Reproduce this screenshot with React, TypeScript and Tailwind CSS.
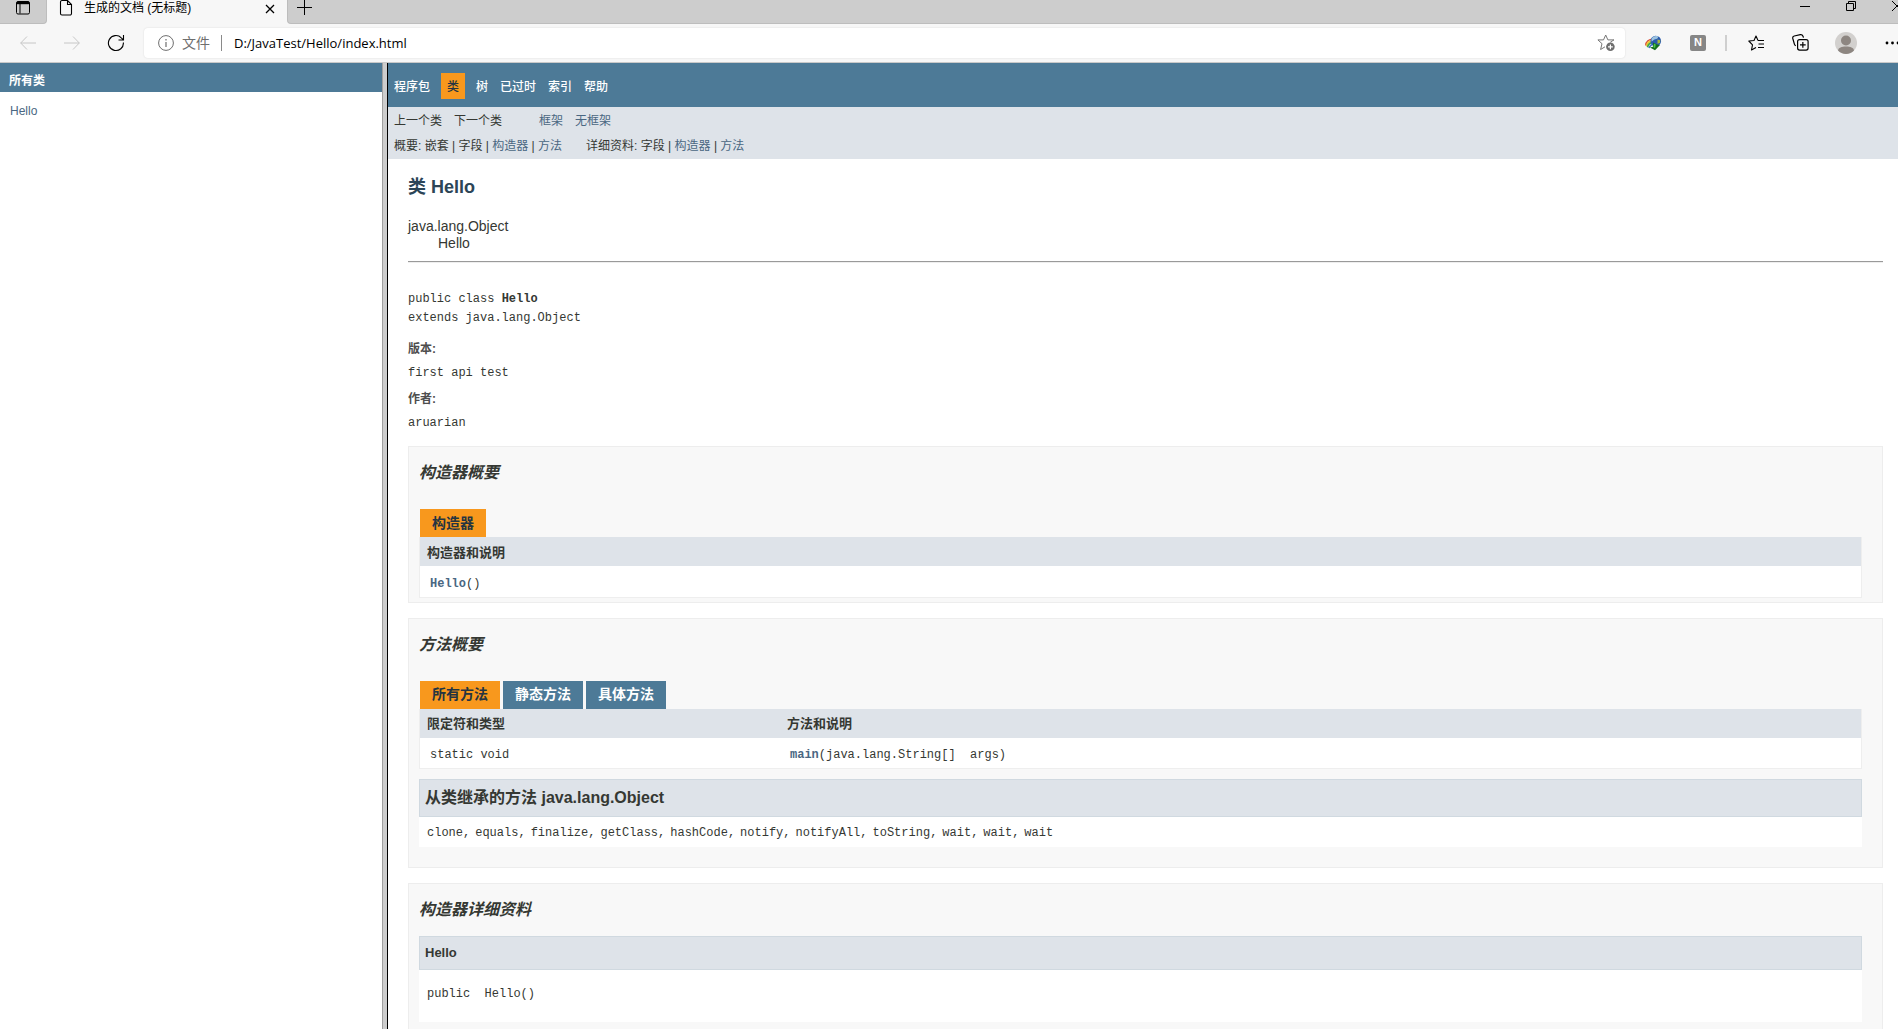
import type { ReactNode } from 'react';
import clsx from 'clsx';

const topNav = ['程序包', '类', '树', '已过时', '索引', '帮助'];
const methodTabs = ['所有方法', '静态方法', '具体方法'];
const inheritedMethods = [
  'clone',
  'equals',
  'finalize',
  'getClass',
  'hashCode',
  'notify',
  'notifyAll',
  'toString',
  'wait',
  'wait',
  'wait',
];

const mono = "font-['Liberation_Mono','Noto_Sans_CJK_SC',monospace] text-[12px]";

function IconButton({ label, className, children }: { label: string; className?: string; children: ReactNode }) {
  return (
    <button type="button" aria-label={label} className={clsx('flex shrink-0 items-center justify-center', className)}>
      {children}
    </button>
  );
}

function TabStrip() {
  return (
    <div className="flex h-6 items-stretch bg-[#f7f7f7]">
      <IconButton label="标签页操作" className="w-[47px] rounded-br border-r border-b border-[#bdbdbd] bg-[#cdcdcd] pb-2">
        <svg width="16" height="16" viewBox="0 0 16 16" fill="none" stroke="#000" className="shrink-0">
          <rect x="1.5" y="1.5" width="13" height="12.500" rx="1.500" />
          <path d="M2 3h12" strokeWidth="2.400" />
          <path d="M5 4v9.500" />
        </svg>
      </IconButton>
      <div className="flex w-60 items-start pl-3">
        <svg width="14" height="16" viewBox="0 0 14 16" fill="none" stroke="#000" strokeWidth="1.1" className="shrink-0">
          <path d="M2.500 .5H8.500L12.500 4.500V13.500a1.500 1.500 0 0 1-1.500 1.500H3a1.500 1.500 0 0 1-1.500-1.500V2A1.500 1.500 0 0 1 3 .5ZM8.500 .5V4.500H12.500" />
        </svg>
        <span className="ml-[11px] flex-1 text-[12px] leading-4 text-black">生成的文档 (无标题)</span>
        <IconButton label="关闭标签页" className="mr-[11px] h-[17px] w-3">
          <svg width="10" height="10" viewBox="0 0 10 10" stroke="#000" strokeWidth="1.3">
            <path d="M1 1l8 8M9 1L1 9" />
          </svg>
        </IconButton>
      </div>
      <div className="flex flex-1 items-start justify-between overflow-hidden rounded-bl border-b border-l border-[#bdbdbd] bg-[#cdcdcd]">
        <IconButton label="新建标签页" className="ml-[9px] h-[15px]">
          <svg width="15" height="15" viewBox="0 0 15 15" stroke="#000">
            <path d="M7.500 0v15M0 7.500h15" />
          </svg>
        </IconButton>
        <div className="flex h-3 items-center">
          <IconButton label="最小化">
            <svg width="10" height="10" viewBox="0 0 10 10" stroke="#000">
              <path d="M0 5.500h10" />
            </svg>
          </IconButton>
          <IconButton label="还原" className="ml-9">
            <svg width="10" height="10" viewBox="0 0 10 10" fill="none" stroke="#000">
              <path d="M.5 2.500h7v7h-7zM2.500 2.500v-2h7v7h-2" />
            </svg>
          </IconButton>
          <IconButton label="关闭" className="-mr-1 ml-9">
            <svg width="10" height="10" viewBox="0 0 10 10" stroke="#000">
              <path d="M0 0l10 10M10 0L0 10" />
            </svg>
          </IconButton>
        </div>
      </div>
    </div>
  );
}

function AddressBar() {
  return (
    <div className="flex h-[38px] items-center bg-[#f7f7f7] pb-px">
      <IconButton label="后退" className="ml-5">
        <svg width="16" height="14" viewBox="0 0 16 14" fill="none" stroke="#c6c6c6">
          <path d="M7 .5L.7 7L7 13.500M.7 7H16" />
        </svg>
      </IconButton>
      <IconButton label="前进" className="ml-7">
        <svg width="16" height="14" viewBox="0 0 16 14" fill="none" stroke="#c6c6c6">
          <path d="M9 .5L15.300 7L9 13.500M15.300 7H0" />
        </svg>
      </IconButton>
      <IconButton label="刷新" className="ml-[27px]">
        <svg width="18" height="18" viewBox="0 0 18 18" fill="none" stroke="#000" strokeWidth="1.1">
          <path d="M16.400 8.500A7.500 7.500 0 1 1 14.300 3.800L16.400 5.800M16.500 1v5h-5" />
        </svg>
      </IconButton>
      <div className="ml-[19px] flex h-[30px] flex-1 items-center rounded bg-white pr-[10px] pl-[14px] shadow-[0_0_2px_rgba(0,0,0,0.12)]">
        <svg width="16" height="16" viewBox="0 0 16 16" fill="none" stroke="#6e6e6e" className="shrink-0">
          <circle cx="8" cy="8" r="7.400" />
          <path d="M8 7v5M8 4v1.500" strokeWidth="1.2" />
        </svg>
        <label htmlFor="address" className="ml-2 text-[14px] leading-5 text-[#6e6e6e]">
          文件
        </label>
        <span className="ml-[11px] h-4 w-px bg-[#8a8a8a]" />
        <input
          id="address"
          defaultValue="D:/JavaTest/Hello/index.html"
          className="ml-3 min-w-0 flex-1 bg-transparent font-['Open_Sans','Noto_Sans_CJK_SC',sans-serif] text-[13px] leading-5 text-black outline-none"
        />
        <IconButton label="添加到收藏夹">
          <svg width="18" height="18" viewBox="0 0 18 18" fill="none" stroke="#767676">
            <path d="M13.300 8.200L17 5.900H10.900L8.700 1L6.500 5.900H.9L5 9.700L3.600 15.500L8 12.800" strokeLinejoin="round" />
            <circle cx="13.400" cy="12.800" r="4.300" fill="#6e6e6e" stroke="none" />
            <path d="M13.400 10.400v4.800M11 12.800h4.800" stroke="#fff" strokeWidth="1.2" />
          </svg>
        </IconButton>
      </div>
      <IconButton label="下载管理器" className="ml-5">
        <svg width="17" height="16" viewBox="0 0 17 16" fill="none">
          <path d="M.8 10.500C.8 6.500 4 4.200 8 4.200" stroke="#d8503a" strokeWidth="1.500" />
          <path d="M1.800 11.200C2 7.500 4.500 5.800 8 5.800" stroke="#f0c52e" strokeWidth="1.700" />
          <path d="M2.500 12.300C3.200 9.200 5 7.600 8 7.600" stroke="#3fa84a" strokeWidth="1.700" />
          <path d="M4 13C4.800 10.800 6 9.500 8.500 9.200" stroke="#3f74c8" strokeWidth="1.500" />
          <circle cx="10.800" cy="6" r="5.300" fill="#2b5cad" />
          <path d="M6.500 4C7.500 1.500 10.500 .5 13 1.500C13.500 3 12 4.200 10 4.200C8.500 4.500 8 6 6.500 6.500Z" fill="#9cc3e0" />
          <path d="M12.500 4.500l2.800.8-.4 2.700-2.400.8z" fill="#a9bd3d" />
          <path d="M8.200 7.500L12 9.500L15 10L10 15.300L5 12.500L8 11.800Z" fill="#14701c" />
          <path d="M9 8.500l1.800 1-.8 3.500-1.600-.8z" fill="#4fc148" />
        </svg>
      </IconButton>
      <IconButton label="扩展 N" className="ml-7 size-4 rounded-xs bg-[#868686] font-['Liberation_Sans',sans-serif] text-[11px] font-bold text-white">
        N
      </IconButton>
      <span className="ml-[19px] h-4 w-0.5 bg-[#cfcfcf]" />
      <IconButton label="收藏夹" className="ml-[21px]">
        <svg width="17" height="16" viewBox="0 0 17 16" fill="none" stroke="#000" strokeWidth="1.1" strokeLinejoin="round">
          <path d="M10 5.500L8 1L6 5.500L.8 6L4.500 9.800L3.500 15L8 12.500M10 5.500H16M10.500 9h5.500M10 12.500h6" />
        </svg>
      </IconButton>
      <IconButton label="集锦" className="ml-[27px]">
        <svg width="17" height="17" viewBox="0 0 17 17" fill="none" stroke="#000" strokeWidth="1.2">
          <rect x="5.600" y="5.600" width="10.500" height="10.500" rx="2" />
          <path d="M10.850 8v5.700M8 10.850h5.700M3.800 11.800C3 11.500 2.600 11 2.400 10.200L.8 4.500C.5 3.200 1 2.300 2.200 2L8.300 .7C9.600 .5 10.500 1 11 2.200L11.500 3.600" />
        </svg>
      </IconButton>
      <IconButton label="个人资料" className="ml-[26px]">
        <svg width="22" height="22" viewBox="0 0 22 22">
          <circle cx="11" cy="11" r="11" fill="#d2d0ce" />
          <circle cx="11" cy="8.500" r="5" fill="#8d8681" />
          <path d="M3 18.500C3.500 15.500 6.500 14.500 11 14.500s7.500 1 8 4A11 11 0 0 1 3 18.500Z" fill="#8d8681" />
        </svg>
      </IconButton>
      <IconButton label="设置及其他" className="-mr-0.5 ml-7">
        <svg width="15" height="4" viewBox="0 0 15 4">
          <circle cx="2" cy="2" r="1.400" />
          <circle cx="7.500" cy="2" r="1.400" />
          <circle cx="13" cy="2" r="1.400" />
        </svg>
      </IconButton>
    </div>
  );
}

function Sidebar() {
  return (
    <nav className="w-[382px] shrink-0 bg-white">
      <h1 className="flex h-[29px] items-center bg-[#4d7a97] pt-[6px] pl-[9px] text-[12px] font-bold text-white">所有类</h1>
      <ul className="px-[10px] pt-[11px] text-[12px] leading-4 text-[#4a6782]">
        <li>
          <a href="#hello">Hello</a>
        </li>
      </ul>
    </nav>
  );
}

function SubNav() {
  return (
    <div className="bg-[#dee3e9] px-[6px] pt-0.5 text-[12px] leading-[25px]">
      <div className="flex gap-3">
        <span>上一个类</span>
        <span>下一个类</span>
        <a href="#frames" className="ml-[25px] text-[#4a6782]">框架</a>
        <a href="#noframes" className="text-[#4a6782]">无框架</a>
      </div>
      <div className="flex gap-6">
        <p>
          概要: 嵌套 | 字段 | <a href="#summary" className="text-[#4a6782]">构造器</a> |{' '}
          <a href="#methods" className="text-[#4a6782]">方法</a>
        </p>
        <p>
          详细资料: 字段 | <a href="#detail" className="text-[#4a6782]">构造器</a> |{' '}
          <a href="#methods" className="text-[#4a6782]">方法</a>
        </p>
      </div>
    </div>
  );
}

function Block({ id, title, className, children }: { id: string; title: string; className?: string; children: ReactNode }) {
  return (
    <section id={id} className={clsx('mb-[15px] border border-[#ededed] bg-[#f8f8f8] pr-5 pl-[10px]', className)}>
      <h3 className="pt-[14px] text-[16px] leading-6 font-bold italic">{title}</h3>
      {children}
    </section>
  );
}

function SummaryTable({ columns, cells }: { columns: string[]; cells: ReactNode[] }) {
  return (
    <table className="w-full table-fixed border-collapse border border-t-0 border-[#eee] bg-white text-left">
      <thead>
        <tr className="h-[29px] bg-[#dee3e9] text-[13px]">
          {columns.map((column, i) => (
            <th key={column} className={clsx('px-[7px] pt-0.5 pb-0 font-bold', columns.length > 1 && i === 0 && 'w-1/4')}>
              {column}
            </th>
          ))}
        </tr>
      </thead>
      <tbody>
        <tr className={clsx('h-[31px]', mono)}>
          {cells.map((cell, i) => (
            <td key={i} className="px-[10px] pt-[5px] pb-0">
              {cell}
            </td>
          ))}
        </tr>
      </tbody>
    </table>
  );
}

function ClassPage() {
  return (
    <main className="min-w-0 flex-1 overflow-hidden bg-white text-[#353833]">
      <ul className="flex h-11 items-center bg-[#4d7a97] pt-0.5 text-[12px] leading-6 font-medium text-white">
        {topNav.map((item) => (
          <li key={item} className={clsx('px-[6px] pt-0.5', item === '类' && 'mx-[5px] bg-[#f8981d] text-[#253441]')}>
            {item === '类' ? item : <a href={`#${item}`}>{item}</a>}
          </li>
        ))}
      </ul>
      <SubNav />

      <div className="pr-[15px] pl-5">
        <h2 className="pt-4 text-[18px] leading-6 font-bold text-[#2c4557]">类 Hello</h2>
        <ul className="mt-[19px] text-[14px] leading-[17px]">
          <li>java.lang.Object</li>
          <li className="pl-[30px]">Hello</li>
        </ul>
        <hr className="mt-[9px] border-t border-b border-t-[#9a9a9a] border-b-[#eee]" />

        <pre className={clsx('mt-[27px] leading-[19px]', mono)}>
          public class <b>Hello</b>
          {'\n'}extends java.lang.Object
        </pre>
        <dl className="mt-3 leading-[18px]">
          <dt className="text-[12px] font-bold text-[#4e4e4e]">版本:</dt>
          <dd className={clsx('mt-[6px] mb-2', mono)}>first api test</dd>
          <dt className="text-[12px] font-bold text-[#4e4e4e]">作者:</dt>
          <dd className={clsx('mt-[6px] mb-[14px]', mono)}>aruarian</dd>
        </dl>

        <Block id="summary" title="构造器概要" className="pb-1">
          <h4 className="mt-6 ml-px flex h-7 w-fit items-center bg-[#f8981d] px-3 text-[14px] font-bold text-[#253441]">
            构造器
          </h4>
          <SummaryTable
            columns={['构造器和说明']}
            cells={[
              <>
                <a href="#hello" className="font-bold text-[#4a6782]">Hello</a>()
              </>,
            ]}
          />
        </Block>

        <Block id="methods" title="方法概要" className="pb-5">
          <div className="mt-6 ml-px flex gap-[3px]">
            {methodTabs.map((tab, i) => (
              <button
                key={tab}
                type="button"
                className={clsx(
                  'h-7 px-3 text-[14px] font-bold',
                  i === 0 ? 'bg-[#f8981d] text-[#253441]' : 'bg-[#4d7a97] text-white',
                )}
              >
                {tab}
              </button>
            ))}
          </div>
          <SummaryTable
            columns={['限定符和类型', '方法和说明']}
            cells={[
              'static void',
              <>
                <a href="#main" className="font-bold text-[#4a6782]">main</a>(java.lang.String[]&nbsp; args)
              </>,
            ]}
          />
          <h4 className="mt-[10px] flex h-[38px] items-center border border-[#d0d9e0] bg-[#dee3e9] px-[5px] text-[16px] font-bold">
            从类继承的方法 java.lang.Object
          </h4>
          <ul className={clsx('flex min-h-[30px] flex-wrap items-center gap-x-[5px] bg-white px-2 pt-0.5', mono)}>
            {inheritedMethods.map((name, i) => (
              <li key={i}>
                {name}
                {i < inheritedMethods.length - 1 && ','}
              </li>
            ))}
          </ul>
        </Block>

        <Block id="detail" title="构造器详细资料" className="pb-5">
          <h4 className="mt-[14px] flex h-[34px] items-center border border-[#d0d9e0] bg-[#dee3e9] px-[5px] text-[13px] font-bold">
            Hello
          </h4>
          <pre className={clsx('bg-white px-2 pt-[15px] pb-[18px] leading-[19px]', mono)}>public  Hello()</pre>
        </Block>
      </div>
    </main>
  );
}

export default function App() {
  return (
    <div className="flex h-screen flex-col overflow-hidden bg-white font-['Liberation_Sans','Noto_Sans_CJK_SC',sans-serif]">
      <header className="shrink-0 border-b border-[#c9c9c9]">
        <TabStrip />
        <AddressBar />
      </header>
      <div className="flex min-h-0 flex-1">
        <Sidebar />
        <div className="w-[6px] shrink-0 border-r border-l border-r-black border-l-[#a0a0a0] bg-[#cdcdcd]" />
        <ClassPage />
      </div>
    </div>
  );
}
